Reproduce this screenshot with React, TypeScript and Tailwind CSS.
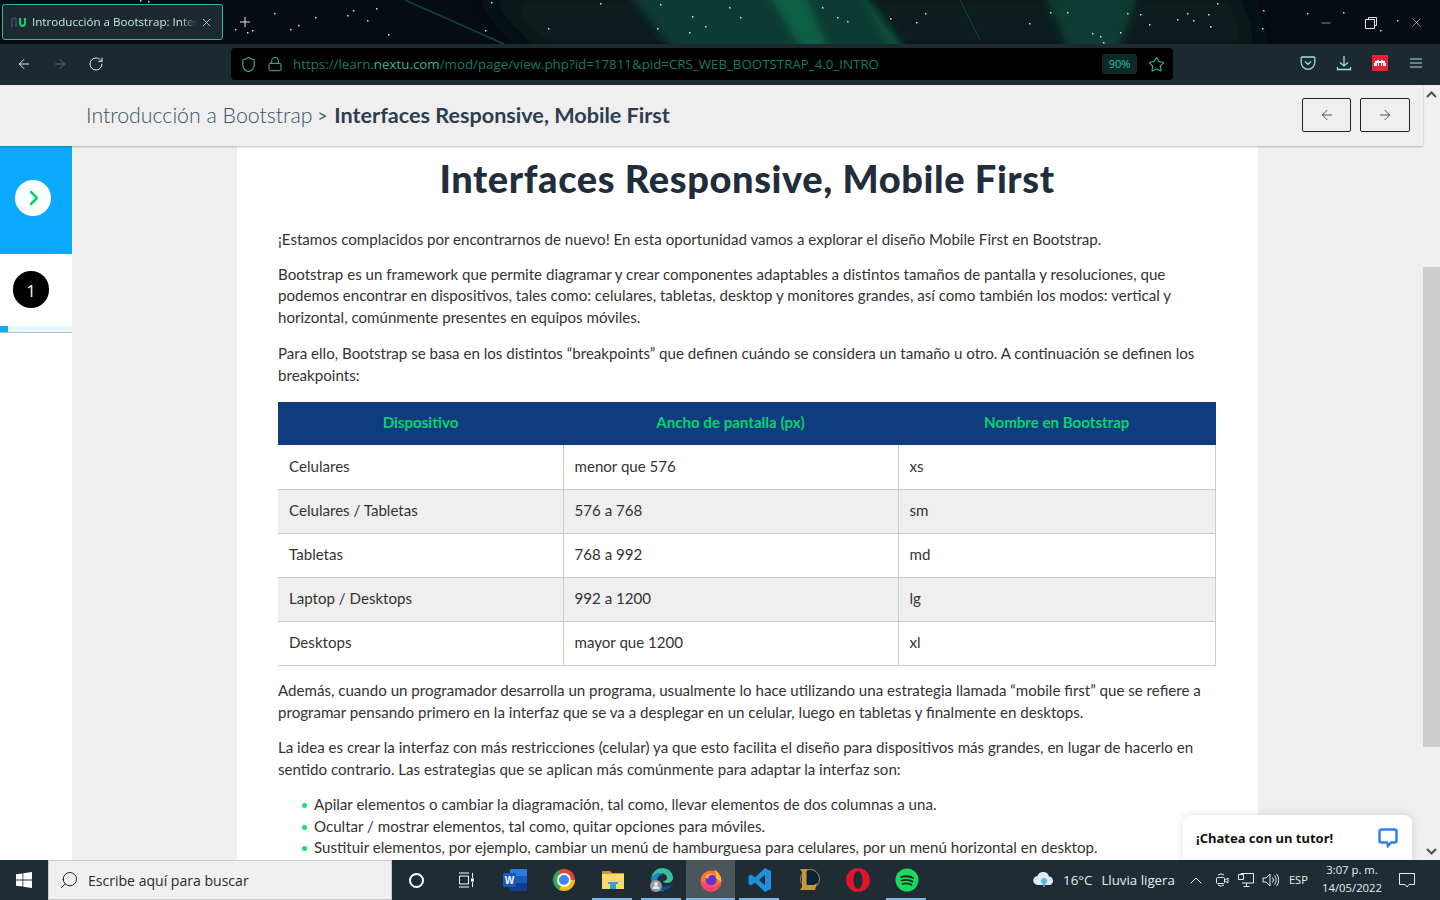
import type { ReactNode } from "react";
import { ArrowLeft, ArrowRight, ChevronRight, Lock, Minus, Plus, RotateCw, Search, Shield, Star, X } from "lucide-react";

const muli = "font-['Lato','Noto_Sans',sans-serif]";

const tableRows = [
  ["Celulares", "menor que 576", "xs"],
  ["Celulares / Tabletas", "576 a 768", "sm"],
  ["Tabletas", "768 a 992", "md"],
  ["Laptop / Desktops", "992 a 1200", "lg"],
  ["Desktops", "mayor que 1200", "xl"],
];

const stars = [
  [140, 0], [148, 1], [274, 13], [315, 17], [347, 15], [353, 10], [376, 8], [367, 20], [388, 34], [290, 29], [298, 25], [247, 32], [252, 30], [235, 29],
  [491, 2], [600, 3], [660, 4], [692, 16], [705, 26], [740, 17], [657, 28], [689, 32], [822, 7], [837, 17], [847, 21], [548, 28], [485, 30], [729, 7], [890, 18], [916, 22], [925, 13],
  [1029, 23], [1050, 12], [1067, 12], [1120, 32], [1092, 33], [1100, 36], [1127, 13], [1140, 14], [1149, 24], [1103, 42], [1177, 19], [1187, 13], [1193, 20],
  [1262, 28], [1217, 3], [1263, 10], [1307, 13], [1343, 12], [1208, 14], [1210, 26], [1397, 20], [1380, 30],
];

function TabStrip() {
  return (
    <div className="relative h-[44px] shrink-0 overflow-hidden bg-[#050c12]">
      {/* nebula streaks behind the tabs */}
      <svg className="absolute inset-0" width="1440" height="44" viewBox="0 0 1440 44">
        <defs>
          <filter id="soft" x="-10%" y="-50%" width="120%" height="200%">
            <feGaussianBlur stdDeviation="5" />
          </filter>
          <filter id="softer" x="-10%" y="-50%" width="120%" height="200%">
            <feGaussianBlur stdDeviation="14" />
          </filter>
        </defs>
        <polygon points="480,-10 1240,-10 1260,54 540,54" fill="#071a1d" filter="url(#softer)" />
        <polygon points="625,-10 855,-10 906,54 676,54" fill="#0a3a30" filter="url(#soft)" />
        <polygon points="766,-10 804,-10 830,54 804,54" fill="#0b6145" filter="url(#soft)" />
        <polygon points="855,-10 862,-10 906,54 896,54" fill="#0c5a42" filter="url(#soft)" />
        <polygon points="1043,-10 1140,-10 1117,54 1070,54" fill="#0b3d33" filter="url(#soft)" />
        <line x1="405" y1="0" x2="504" y2="44" stroke="#0f4a35" strokeWidth="1.5" />
        <line x1="960" y1="0" x2="980" y2="40" stroke="#0d4a3c" strokeWidth="1" />
        {stars.map(([x, y]) => (
          <rect key={`${x}-${y}`} x={x} y={y} width="1.5" height="1.5" fill="#cfe6e0" />
        ))}
      </svg>
      <div className="relative flex items-center pl-[2px] pt-[4px]">
        <div className="flex h-[36px] w-[221px] items-center rounded-[3px] border border-[#2ab8a0] bg-[#1c2a30] pl-[8px] pr-[9px]">
          <svg className="shrink-0" width="16" height="10" viewBox="0 0 16 10" fill="none" strokeWidth="2">
            <path d="M1 10V3q0-2 2-2t2 2v7" stroke="#33475a" />
            <path d="M9 1v5q0 3 2.500 3T14 6V1" stroke="#00d66b" />
          </svg>
          <span className="ml-[5px] w-[165px] shrink-0 overflow-hidden whitespace-nowrap text-[11.6px] text-[#c8e6e0] font-['Open_Sans',sans-serif] [mask-image:linear-gradient(to_right,black_90%,transparent)]">
            Introducción a Bootstrap: Interfaces
          </span>
          <X className="ml-[3px] text-[#c8e6e0]" size={13} strokeWidth={1.5} />
        </div>
        <Plus className="ml-[14px] text-[#d8e8e4]" size={16} strokeWidth={1.5} />
      </div>
      <div className="absolute right-[16px] top-[15px] flex items-center gap-[32px] text-[#d8e8e4]">
        <Minus size={14} strokeWidth={1} />
        <svg width="12" height="12" viewBox="0 0 12 12" fill="none" stroke="currentColor">
          <path d="M3.500 2.500V.5h8v8h-2M.5 2.500h9v9h-9z" />
        </svg>
        <X size={15} strokeWidth={1} />
      </div>
    </div>
  );
}

function Toolbar() {
  return (
    <div className="flex h-[41px] shrink-0 items-start bg-[#1c2a30] pt-[4px]">
      <div className="flex h-[32px] w-[231px] items-center gap-[20px] pl-[16px]">
        <ArrowLeft className="text-[#d3ece7]" size={16} strokeWidth={1.5} />
        <ArrowRight className="text-[#566a6c]" size={16} strokeWidth={1.5} />
        <RotateCw className="text-[#d3ece7]" size={16} strokeWidth={1.5} />
      </div>
      <div className="flex h-[32px] w-[942px] items-center rounded-[4px] bg-black pl-[9px] pr-[8px]">
        <Shield className="text-[#2fbfa5]" size={17} strokeWidth={1.5} />
        <Lock className="ml-[10px] text-[#2fbfa5]" size={16} strokeWidth={1.5} />
        <span className="ml-[10px] pt-[2px] text-[13.33px] text-[#137a6a] font-['Open_Sans',sans-serif]">
          https://learn.<span className="text-[#25b89f]">nextu.com</span>/mod/page/view.php?id=17811&pid=CRS_WEB_BOOTSTRAP_4.0_INTRO
        </span>
        <span className="ml-auto flex h-[20px] w-[35px] items-center justify-center rounded-[3px] bg-[#0d2a28] text-[11px] text-[#2fbfa5] font-['Open_Sans',sans-serif]">
          90%
        </span>
        <Star className="ml-[11px] text-[#2fbfa5]" size={17} strokeWidth={1.5} />
      </div>
      <div className="ml-auto flex h-[30px] items-center gap-[20px] pr-[18px] text-[#9fe3d6]">
        <svg width="16" height="16" viewBox="0 0 16 16" fill="none" stroke="currentColor" strokeWidth="1.3">
          <path d="M2.200 2h11.600c.6 0 1 .4 1 1v4.500a6.800 6.800 0 0 1-13.600 0V3c0-.6.4-1 1-1z" />
          <path d="M5 6.500l3 2.800 3-2.800" />
        </svg>
        <svg width="16" height="16" viewBox="0 0 16 16" fill="none" stroke="currentColor" strokeWidth="1.3">
          <path d="M8 1v10M4 7.500L8 11l4-3.500M1.500 12v2.500h13V12" />
        </svg>
        <svg width="16" height="16" viewBox="0 0 16 16">
          <rect width="16" height="16" fill="#e8213a" />
          <path d="M2 11V8h1V6h2V5h2v1h2V5h2v1h2v2h1v3h-3V8h-1v3H9V8H7v3H6V8H5v3z" fill="#fff" />
        </svg>
        <svg className="ml-[2px]" width="12" height="10" viewBox="0 0 12 10" stroke="currentColor" strokeWidth="1.2">
          <path d="M0 1h12M0 5h12M0 9h12" />
        </svg>
      </div>
    </div>
  );
}

function CourseHeader() {
  return (
    <div className="z-10 mr-[17px] flex h-[61px] shrink-0 items-center bg-[#efefef] pl-[86px] pr-[13px] shadow-[0_1px_2px_rgba(0,0,0,0.25)]">
      <span className="text-[21.3px] font-light text-[#3a5068] font-['Lato',sans-serif]">Introducción a Bootstrap</span>
      <span className="ml-[5px] text-[17px] text-[#3a5068] font-['Lato',sans-serif]">&gt;</span>
      <span className="ml-[7px] text-[21.6px] font-bold text-[#2c3e50] font-['Lato',sans-serif]">Interfaces Responsive, Mobile First</span>
      <div className="mb-[1px] ml-auto flex gap-[9px]">
        <button className="flex h-[34px] w-[49px] items-center justify-center rounded-[2px] border border-[#222]">
          <ArrowLeft className="text-[#333]" size={16} strokeWidth={1.25} />
        </button>
        <button className="flex h-[34px] w-[50px] items-center justify-center rounded-[2px] border border-[#222]">
          <ArrowRight className="text-[#333]" size={16} strokeWidth={1.25} />
        </button>
      </div>
    </div>
  );
}

function Sidebar() {
  return (
    <aside className="w-[72px] shrink-0 bg-white shadow-[1px_0_2px_rgba(0,0,0,0.2)]">
      <div className="flex h-[108px] items-center justify-center bg-[#0aabff] pb-[4px] pr-[6px]">
        <div className="flex h-[36px] w-[36px] items-center justify-center rounded-full bg-white">
          <ChevronRight className="ml-[1px] text-[#00d66b]" size={24} strokeWidth={2.5} />
        </div>
      </div>
      <div className="flex h-[72px] items-center justify-center pb-[1px] pr-[10px]">
        <div className="flex h-[37px] w-[36px] items-center justify-center rounded-full bg-black pt-[2px] text-[16px] text-white font-['Open_Sans',sans-serif]">
          1
        </div>
      </div>
      <div className="h-[7px] border-b border-[#bbb] bg-[#e6f6ff]">
        <div className="h-[6px] w-[8px] bg-[#0aabff]" />
      </div>
    </aside>
  );
}

function Article() {
  return (
    <article className={`ml-[165px] h-full w-[1021px] bg-white pl-[41px] pr-[42px] text-[15.1px] leading-[21.6px] text-[#333] ${muli}`}>
      <h1 className="pt-[8px] text-center text-[38px] font-black leading-[48px] tracking-[0.6px] text-[#1f2d3d]">Interfaces Responsive, Mobile First</h1>
      <p className="mt-[27px]">¡Estamos complacidos por encontrarnos de nuevo! En esta oportunidad vamos a explorar el diseño Mobile First en Bootstrap.</p>
      <p className="mt-[13px]">
        Bootstrap es un framework que permite diagramar y crear componentes adaptables a distintos tamaños de pantalla y resoluciones, que podemos encontrar en dispositivos, tales como: celulares, tabletas, desktop y monitores grandes, así como también los modos: vertical y horizontal, comúnmente presentes en equipos móviles.
      </p>
      <p className="mt-[15px]">
        Para ello, Bootstrap se basa en los distintos “breakpoints” que definen cuándo se considera un tamaño u otro. A continuación se definen los breakpoints:
      </p>
      <table className="mt-[15px] w-full table-fixed border-collapse">
        <thead>
          <tr className="h-[43px] bg-[#0f3c7e] text-[#00d66b]">
            <th className="w-[285px] text-center font-bold">Dispositivo</th>
            <th className="w-[335px] text-center font-bold">Ancho de pantalla (px)</th>
            <th className="text-center font-bold">Nombre en Bootstrap</th>
          </tr>
        </thead>
        <tbody>
          {tableRows.map((row, i) => (
            <tr key={row[0]} className={`${i === 0 ? "h-[45px]" : "h-[44px]"} ${i % 2 === 1 ? "bg-[#efefef]" : "bg-white"}`}>
              <td className="border-b border-r border-[#ccc] pb-[1px] pl-[11px]">{row[0]}</td>
              <td className="border-b border-r border-[#ccc] pb-[1px] pl-[11px]">{row[1]}</td>
              <td className="border-b border-r border-[#ccc] pb-[1px] pl-[11px]">{row[2]}</td>
            </tr>
          ))}
        </tbody>
      </table>
      <p className="mt-[14px]">
        Además, cuando un programador desarrolla un programa, usualmente lo hace utilizando una estrategia llamada “mobile first” que se refiere a programar pensando primero en la interfaz que se va a desplegar en un celular, luego en tabletas y finalmente en desktops.
      </p>
      <p className="mt-[14px]">
        La idea es crear la interfaz con más restricciones (celular) ya que esto facilita el diseño para dispositivos más grandes, en lugar de hacerlo en sentido contrario. Las estrategias que se aplican más comúnmente para adaptar la interfaz son:
      </p>
      <ul className="mt-[14px] pl-[36px] leading-[21.4px]">
        {[
          "Apilar elementos o cambiar la diagramación, tal como, llevar elementos de dos columnas a una.",
          "Ocultar / mostrar elementos, tal como, quitar opciones para móviles.",
          "Sustituir elementos, por ejemplo, cambiar un menú de hamburguesa para celulares, por un menú horizontal en desktop.",
        ].map((item) => (
          <li key={item} className="relative">
            <span className="absolute left-[-12px] top-[9px] h-[5px] w-[5px] rounded-full bg-[#10e46a]" />
            {item}
          </li>
        ))}
      </ul>
    </article>
  );
}

function Scrollbar() {
  return (
    <div className="absolute bottom-0 right-0 top-0 flex w-[17px] flex-col bg-[#f0f0f0]">
      <svg className="ml-[3px] mt-[6px]" width="11" height="7" viewBox="0 0 11 7" fill="none" stroke="#505050" strokeWidth="2">
        <path d="M1 6l4.500-4.500L10 6" />
      </svg>
      <div className="mt-[169px] h-[480px] w-full bg-[#cdcdcd]" />
      <svg className="mb-[5px] ml-[3px] mt-auto" width="11" height="7" viewBox="0 0 11 7" fill="none" stroke="#505050" strokeWidth="2">
        <path d="M1 1l4.500 4.500L10 1" />
      </svg>
    </div>
  );
}

function TaskIcon({ children, active, highlight }: { children: ReactNode; active?: boolean; highlight?: boolean }) {
  return (
    <div className={`relative flex h-[40px] w-[49px] items-center justify-center ${highlight ? "bg-[#4a565c]" : ""}`}>
      {children}
      {active && <span className={`absolute bottom-0 h-[2px] bg-[#76b9ed] ${highlight ? "left-0 right-0" : "left-[4px] right-[5px]"}`} />}
    </div>
  );
}

function Taskbar() {
  return (
    <div className="flex h-[40px] shrink-0 items-center bg-[#1f2c33] text-white">
      <div className="flex w-[48px] justify-center">
        <svg width="16" height="16" viewBox="0 0 16 16" fill="#fff">
          <path d="M0 2.300l6.500-.9v6.200H0zM7.300 1.300L16 0v7.600H7.300zM0 8.400h6.500v6.200L0 13.700zM7.300 8.400H16V16l-8.700-1.200z" />
        </svg>
      </div>
      <div className="flex h-[40px] w-[344px] items-center border border-[#c8c8c8] bg-[#f0f0f0] pl-[10px] font-['Open_Sans',sans-serif]">
        <Search className="-scale-x-100 text-[#222]" size={20} strokeWidth={1.2} />
        <span className="ml-[9px] pt-[1px] text-[14.05px] text-[#2b2b2b]">Escribe aquí para buscar</span>
      </div>
      <div className="flex h-[40px] items-center">
        <TaskIcon><div className="h-[15px] w-[15px] rounded-full border-2 border-white" /></TaskIcon>
        <TaskIcon>
          <svg width="16" height="16" viewBox="0 0 16 16" fill="none" stroke="#fff">
            <path d="M1 1h10M1 15h10M1.500 4h9v8h-9zM14.500 1v5M14.500 10v5" />
            <rect x="13" y="6.500" width="3" height="3" fill="#fff" stroke="none" />
          </svg>
        </TaskIcon>
        <TaskIcon>
          <svg width="24" height="24" viewBox="0 0 24 24">
            <rect x="7" y="1" width="17" height="22" rx="1" fill="#2b7cd3" />
            <rect x="7" y="8" width="17" height="7" fill="#185abd" />
            <rect x="7" y="15" width="17" height="8" fill="#103f91" />
            <rect x="0" y="5" width="13" height="14" rx="1" fill="#1a5bb5" />
            <text x="6.500" y="15.500" fontSize="10" fontWeight="700" fill="#fff" textAnchor="middle" fontFamily="Liberation Sans">W</text>
          </svg>
        </TaskIcon>
        <TaskIcon>
          <div className="h-[22px] w-[22px] rounded-full bg-[conic-gradient(from_-30deg,#ea4335_0_33%,#fbbc05_33%_66%,#34a853_66%_100%)] p-[6px]">
            <div className="h-full w-full rounded-full bg-[#4285f4] outline-[2px] outline-white" />
          </div>
        </TaskIcon>
        <TaskIcon active>
          <svg width="22" height="20" viewBox="0 0 22 20">
            <path d="M0 1h8l2 2h12v15H0z" fill="#c99a2e" />
            <rect x="0" y="4" width="22" height="15" fill="#ffd96a" />
            <path d="M6 12h10v2h-2v5H8v-5H6z" fill="#3a9be0" />
          </svg>
        </TaskIcon>
        <TaskIcon active>
          <svg width="24" height="24" viewBox="0 0 24 24">
            <path d="M1 11C2 4 7 0 12 0c6 0 11 4 11 10 0 3-3 5-6 5-2 0-4-1-4-2 2 0 4-1 4-3 0-3-3-5-6-5-4 0-8 2-10 6z" fill="#35c1a0" />
            <path d="M1 11c2-4 6-6 10-6 1 0 2 0 3 1-4 0-7 3-7 8 0 4 3 8 8 9-7 1-14-4-14-12z" fill="#1a84d0" />
            <path d="M9 21c5 3 11 0 14-5-3 2-7 3-10 2z" fill="#114f9a" />
            <circle cx="6" cy="18" r="6" fill="#9a9a9a" />
            <circle cx="6" cy="16" r="2" fill="#e8e8e8" />
            <path d="M2.500 21a3.500 3 0 0 1 7 0z" fill="#e8e8e8" />
          </svg>
        </TaskIcon>
        <TaskIcon active highlight>
          <svg width="24" height="24" viewBox="0 0 24 24">
            <circle cx="12" cy="13" r="10.500" fill="#ff7139" />
            <path d="M2 13a10 10 0 0 0 20 1c-3 5-11 6-15 2-2-1-4-2-5-3z" fill="#ff3f6c" />
            <circle cx="12" cy="12" r="5.500" fill="#6b2fd0" />
            <path d="M15 1c4 3 8 7 7 13l-5-4c0-3 0-6-2-9z" fill="#ffbd2e" />
            <path d="M6 9c2-4 7-4 10-2-3-1-7 0-7 4z" fill="#ffbd2e" />
          </svg>
        </TaskIcon>
        <TaskIcon active>
          <svg width="24" height="24" viewBox="0 0 24 24">
            <path d="M17 0l6 3v18l-6 3L7 14.500l-4 3-2.500-1.500V8L3 6.500l4 3zM17 7l-6 5 6 5z" fill="#1e8fd8" fillRule="evenodd" />
          </svg>
        </TaskIcon>
        <TaskIcon>
          <svg width="22" height="24" viewBox="0 0 22 24">
            <circle cx="12" cy="11" r="9.500" fill="#0b2238" stroke="#b08a3c" />
            <path d="M2 1h8L8.500 3v14H16l3-2-2 7H2l2-3V4z" fill="#c8963e" />
          </svg>
        </TaskIcon>
        <TaskIcon>
          <svg width="24" height="24" viewBox="0 0 24 24">
            <path d="M12 0c6.600 0 12 5.400 12 12s-5.400 12-12 12S0 18.600 0 12 5.400 0 12 0zm0 3c-2.500 0-4.500 4-4.500 9s2 9 4.500 9 4.500-4 4.500-9-2-9-4.500-9z" fill="#e0142a" fillRule="evenodd" />
          </svg>
        </TaskIcon>
        <TaskIcon active>
          <svg width="24" height="24" viewBox="0 0 24 24" fill="none">
            <circle cx="12" cy="12" r="11.500" fill="#1ed760" />
            <path d="M6 9c4-1 9-1 12 1M6.500 12.500c3.500-1 8-.8 11 1M7.500 16c3-.8 6.500-.6 9 .8" stroke="#10301c" strokeWidth="1.800" strokeLinecap="round" />
          </svg>
        </TaskIcon>
      </div>
      <div className="ml-auto flex items-center font-['Open_Sans',sans-serif] text-[13.3px] text-[#e8eef0]">
        <svg width="24" height="16" viewBox="0 0 24 16">
          <path d="M6 13a4.500 4.500 0 0 1-.5-9A6 6 0 0 1 17 4.500a4.500 4.500 0 0 1 1.500 8.500z" fill="#dfeaf2" />
          <path d="M12 8v7" stroke="#3aa0e8" strokeWidth="2" />
          <circle cx="12" cy="9" r="3" fill="#5cb4f0" />
        </svg>
        <span className="ml-[7px] pt-[2px]">16°C</span>
        <span className="ml-[9px] pt-[2px]">Lluvia ligera</span>
        <svg className="ml-[15px]" width="12" height="7" viewBox="0 0 12 7" fill="none" stroke="#e8eef0">
          <path d="M.5 6.500L6 1l5.500 5.500" />
        </svg>
        <svg className="ml-[13px]" width="14" height="16" viewBox="0 0 14 16" fill="none" stroke="#e8eef0">
          <path d="M3 3a5 5 0 0 1 6 0M3 13a5 5 0 0 0 6 0" />
          <rect x="1.500" y="5.500" width="8" height="6" rx="1" />
          <path d="M10 8l3-2v5l-3-2" />
        </svg>
        <svg className="ml-[9px]" width="16" height="16" viewBox="0 0 16 16" fill="none" stroke="#e8eef0">
          <path d="M.5 2.500h5v5h-5zM3 2.500V1.500h12.500v9.500H4M8.500 11v3M5.500 14.500h6" />
        </svg>
        <svg className="ml-[8px]" width="17" height="14" viewBox="0 0 17 14" fill="none" stroke="#e8eef0">
          <path d="M1 5h3l4-4v12L4 9H1zM10.500 4.500a4 4 0 0 1 0 5M12.500 2.500a7 7 0 0 1 0 9M14.500 1a9 9 0 0 1 0 12" />
        </svg>
        <span className="ml-[10px] text-[11.2px]">ESP</span>
        <div className="mb-[2px] ml-[14px] flex w-[60px] flex-col items-center text-[11.3px] leading-[18px]">
          <span>3:07 p. m.</span>
          <span>14/05/2022</span>
        </div>
        <svg className="ml-[17px] mr-[25px]" width="16" height="16" viewBox="0 0 16 16" fill="none" stroke="#e8eef0">
          <path d="M.5 1.500h15v11H10l-2 2.500-2-2.500H.5z" />
        </svg>
      </div>
    </div>
  );
}

export default function App() {
  return (
    <div className="flex h-[900px] w-[1440px] flex-col overflow-hidden bg-[#efefef]">
      <TabStrip />
      <Toolbar />
      <div className="relative flex min-h-0 flex-1 flex-col">
        <CourseHeader />
        <div className="flex min-h-0 flex-1 overflow-hidden">
          <Sidebar />
          <div className="min-w-0 flex-1 bg-[#efefef]">
            <Article />
          </div>
        </div>
        <Scrollbar />
        <div className="absolute bottom-0 right-[28px] flex h-[45px] w-[229px] items-center justify-between rounded-t-[8px] bg-white pl-[13px] pr-[14px] shadow-[0_0_10px_rgba(0,0,0,0.12)]">
          <span className="pt-[2px] text-[13px] font-bold text-[#111] font-['Noto_Sans',sans-serif]">¡Chatea con un tutor!</span>
          <svg width="20" height="20" viewBox="0 0 20 20" fill="none" stroke="#2f80ed" strokeWidth="2.500">
            <path d="M3.500 1.500h13a2 2 0 0 1 2 2v9a2 2 0 0 1-2 2H13l-3 3.500-1-3.500H3.500a2 2 0 0 1-2-2v-9a2 2 0 0 1 2-2z" />
          </svg>
        </div>
      </div>
      <Taskbar />
    </div>
  );
}
